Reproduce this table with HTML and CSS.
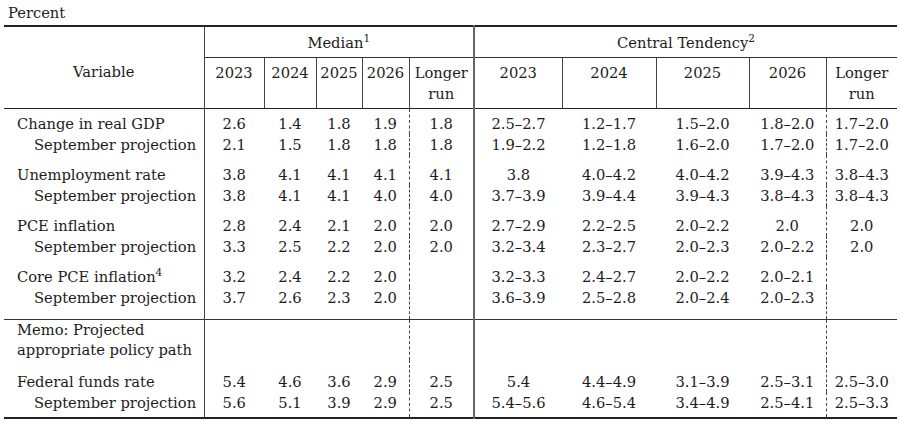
FILE: index.html
```html
<!DOCTYPE html>
<html lang="en">
<head>
<meta charset="utf-8">
<title>Economic projections</title>
<link rel="stylesheet" href="styles.css">
</head>
<body>
<div class="page">
  <div class="caption">Percent</div>
  <table class="proj">
    <colgroup>
      <col class="c-var">
      <col class="c-m23"><col class="c-m24"><col class="c-m25"><col class="c-m26"><col class="c-mlr">
      <col class="c-t23"><col class="c-t24"><col class="c-t25"><col class="c-t26"><col class="c-tlr">
    </colgroup>
    <thead>
      <tr class="h1">
        <th class="var" rowspan="2">Variable</th>
        <th class="grp" colspan="5">Median<sup>1</sup></th>
        <th class="grp ct" colspan="5">Central Tendency<sup>2</sup></th>
      </tr>
      <tr class="h2">
        <th>2023</th><th>2024</th><th>2025</th><th>2026</th><th>Longer<br>run</th>
        <th class="ct">2023</th><th>2024</th><th>2025</th><th>2026</th><th>Longer<br>run</th>
      </tr>
    </thead>
    <tbody>
      <tr class="first">
        <td class="lbl">Change in real GDP</td>
        <td>2.6</td><td>1.4</td><td>1.8</td><td>1.9</td><td class="lr">1.8</td>
        <td class="ct">2.5–2.7</td><td>1.2–1.7</td><td>1.5–2.0</td><td>1.8–2.0</td><td class="lr">1.7–2.0</td>
      </tr>
      <tr>
        <td class="lbl sub">September projection</td>
        <td>2.1</td><td>1.5</td><td>1.8</td><td>1.8</td><td class="lr">1.8</td>
        <td class="ct">1.9–2.2</td><td>1.2–1.8</td><td>1.6–2.0</td><td>1.7–2.0</td><td class="lr">1.7–2.0</td>
      </tr>
      <tr class="gap">
        <td class="lbl">Unemployment rate</td>
        <td>3.8</td><td>4.1</td><td>4.1</td><td>4.1</td><td class="lr">4.1</td>
        <td class="ct">3.8</td><td>4.0–4.2</td><td>4.0–4.2</td><td>3.9–4.3</td><td class="lr">3.8–4.3</td>
      </tr>
      <tr>
        <td class="lbl sub">September projection</td>
        <td>3.8</td><td>4.1</td><td>4.1</td><td>4.0</td><td class="lr">4.0</td>
        <td class="ct">3.7–3.9</td><td>3.9–4.4</td><td>3.9–4.3</td><td>3.8–4.3</td><td class="lr">3.8–4.3</td>
      </tr>
      <tr class="gap">
        <td class="lbl">PCE inflation</td>
        <td>2.8</td><td>2.4</td><td>2.1</td><td>2.0</td><td class="lr">2.0</td>
        <td class="ct">2.7–2.9</td><td>2.2–2.5</td><td>2.0–2.2</td><td>2.0</td><td class="lr">2.0</td>
      </tr>
      <tr>
        <td class="lbl sub">September projection</td>
        <td>3.3</td><td>2.5</td><td>2.2</td><td>2.0</td><td class="lr">2.0</td>
        <td class="ct">3.2–3.4</td><td>2.3–2.7</td><td>2.0–2.3</td><td>2.0–2.2</td><td class="lr">2.0</td>
      </tr>
      <tr class="gap">
        <td class="lbl">Core PCE inflation<sup>4</sup></td>
        <td>3.2</td><td>2.4</td><td>2.2</td><td>2.0</td><td class="lr"></td>
        <td class="ct">3.2–3.3</td><td>2.4–2.7</td><td>2.0–2.2</td><td>2.0–2.1</td><td class="lr"></td>
      </tr>
      <tr class="endgrp">
        <td class="lbl sub">September projection</td>
        <td>3.7</td><td>2.6</td><td>2.3</td><td>2.0</td><td class="lr"></td>
        <td class="ct">3.6–3.9</td><td>2.5–2.8</td><td>2.0–2.4</td><td>2.0–2.3</td><td class="lr"></td>
      </tr>
      <tr class="memo">
        <td class="lbl">Memo: Projected<br>appropriate policy path</td>
        <td></td><td></td><td></td><td></td><td class="lr"></td>
        <td class="ct"></td><td></td><td></td><td></td><td class="lr"></td>
      </tr>
      <tr class="gap2">
        <td class="lbl">Federal funds rate</td>
        <td>5.4</td><td>4.6</td><td>3.6</td><td>2.9</td><td class="lr">2.5</td>
        <td class="ct">5.4</td><td>4.4–4.9</td><td>3.1–3.9</td><td>2.5–3.1</td><td class="lr">2.5–3.0</td>
      </tr>
      <tr class="last">
        <td class="lbl sub">September projection</td>
        <td>5.6</td><td>5.1</td><td>3.9</td><td>2.9</td><td class="lr">2.5</td>
        <td class="ct">5.4–5.6</td><td>4.6–5.4</td><td>3.4–4.9</td><td>2.5–4.1</td><td class="lr">2.5–3.3</td>
      </tr>
    </tbody>
  </table>
</div>
</body>
</html>
```
FILE: styles.css
```css
html, body {
  margin: 0;
  padding: 0;
  background: #ffffff;
}

body {
  font-family: "DejaVu Serif", "Liberation Serif", serif;
  font-size: 14.7px;
  letter-spacing: 0;
  color: #1c1c1c;
}

.page {
  width: 893px;
  padding: 0 3px 0 4px;
}

.caption {
  height: 25px;
  line-height: 21px;
  padding: 2px 0 0 4px;
  box-sizing: border-box;
}

.proj {
  width: 893px;
  table-layout: fixed;
  border-collapse: collapse;
  border-top: 2px solid #222;
  border-bottom: 2px solid #222;
}

.c-var { width: 200px; }
.c-m23 { width: 60px; }
.c-m24 { width: 52px; }
.c-m25 { width: 46px; }
.c-m26 { width: 47px; }
.c-mlr { width: 65px; }
.c-t23 { width: 88px; }
.c-t24 { width: 94px; }
.c-t25 { width: 93px; }
.c-t26 { width: 77px; }
.c-tlr { width: 71px; }

.proj th,
.proj td {
  padding: 0;
  font-weight: normal;
  text-align: center;
  line-height: 21px;
  white-space: nowrap;
}

.proj sup {
  font-size: 10.5px;
  line-height: 0;
  vertical-align: 6px;
}

/* header */
.proj th.var {
  vertical-align: top;
  padding-top: 34px;
  border-right: 1px solid #444;
  border-bottom: 1px solid #222;
}

.h1 th.grp {
  height: 30px;
  vertical-align: middle;
  border-bottom: 1px solid #333;
}

.h1 th.ct {
  border-left: 2px solid #666;
}

.h2 th {
  vertical-align: top;
  padding: 4px 0 4px;
  border-left: 1px solid #444;
  border-bottom: 1px solid #222;
}

.h2 th.ct {
  border-left: 2px solid #666;
}

/* body */
.proj td.lbl {
  text-align: left;
  padding-left: 13px;
  border-right: 1px solid #444;
}

.proj td.sub {
  padding-left: 30px;
}

.proj td.ct {
  border-left: 2px solid #666;
}

.proj td.lr {
  border-left: 1px dashed #444;
}

.first td { padding-top: 4px; }
.gap td { padding-top: 9px; }
.endgrp td { padding-bottom: 11px; }

.memo td {
  border-top: 1px solid #333;
  line-height: 20px;
  vertical-align: top;
}

.gap2 td { padding-top: 11px; }
.last td { padding-bottom: 4px; }
```
